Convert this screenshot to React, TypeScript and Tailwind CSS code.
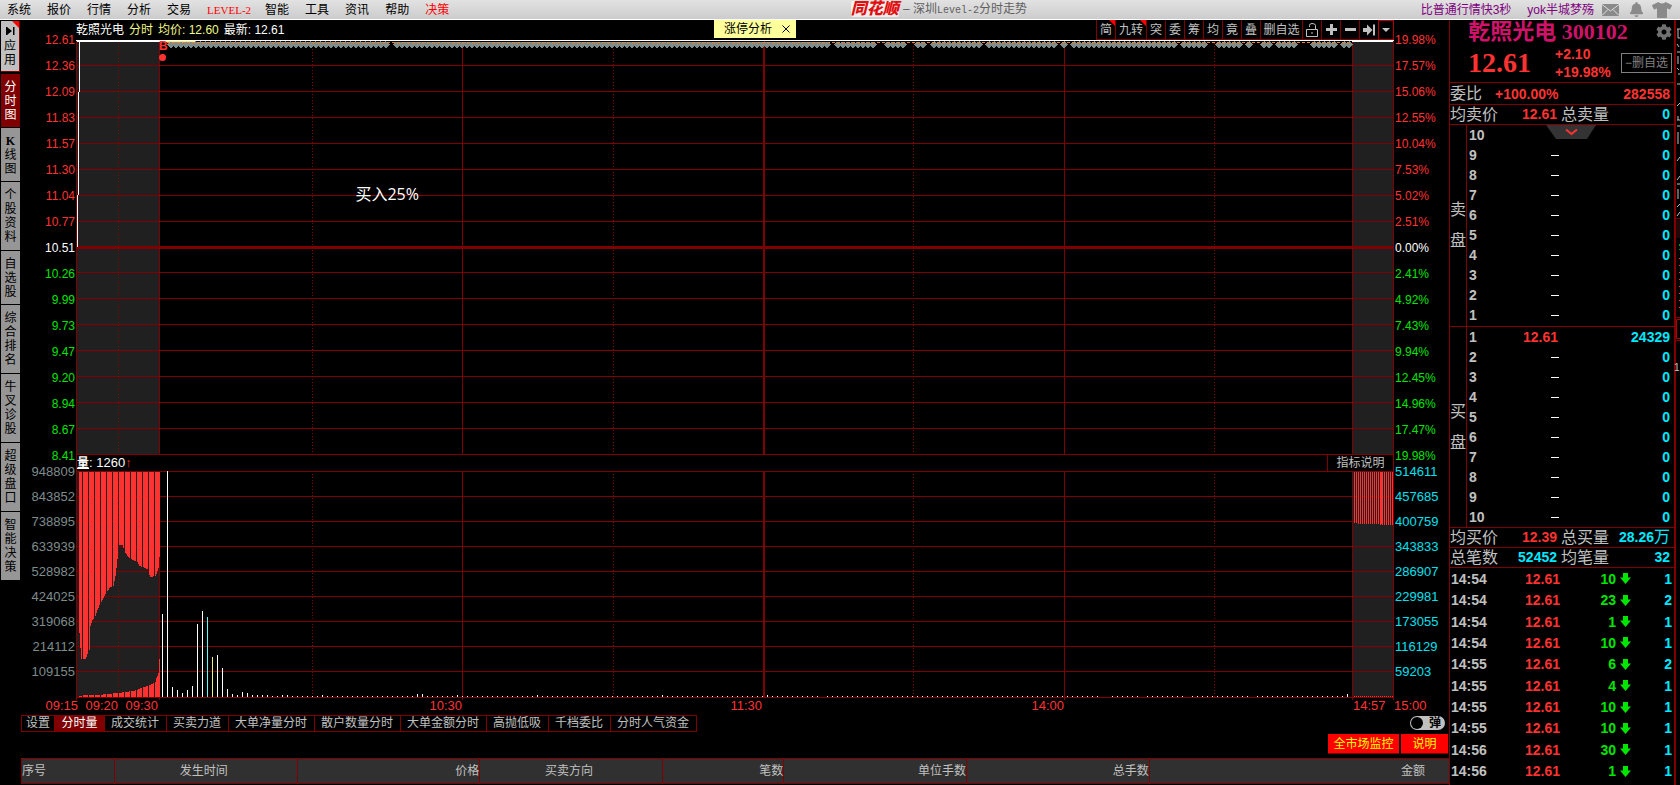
import React from "react";
import clsx from "clsx";
import { FaBell, FaCog, FaTshirt } from "react-icons/fa";

const menu = ["系统", "报价", "行情", "分析", "交易", "LEVEL-2", "智能", "工具", "资讯", "帮助", "决策"];

const sideTabs = ["分时图", "K线图", "个股资料", "自选股", "综合排名", "牛叉诊股", "超级盘口", "智能决策"];

const prices = [
  "12.61", "12.36", "12.09", "11.83", "11.57", "11.30", "11.04", "10.77", "10.51",
  "10.26", "9.99", "9.73", "9.47", "9.20", "8.94", "8.67", "8.41",
];
const percents = [
  "19.98%", "17.57%", "15.06%", "12.55%", "10.04%", "7.53%", "5.02%", "2.51%", "0.00%",
  "2.41%", "4.92%", "7.43%", "9.94%", "12.45%", "14.96%", "17.47%", "19.98%",
];
const volumesLeft = ["948809", "843852", "738895", "633939", "528982", "424025", "319068", "214112", "109155"];
const volumesRight = ["514611", "457685", "400759", "343833", "286907", "229981", "173055", "116129", "59203"];

const indicatorTabs = [
  "成交统计", "买卖力道", "大单净量分时", "散户数量分时", "大单金额分时", "高抛低吸", "千档委比", "分时人气资金",
];

const columns = [
  { label: "序号", className: "w-[6.5%] text-left" },
  { label: "发生时间", className: "w-[12.8%] pr-1 text-center" },
  { label: "价格", className: "w-[12.8%] text-right" },
  { label: "买卖方向", className: "w-[12.8%] pr-1 text-center" },
  { label: "笔数", className: "w-[8.5%] text-right" },
  { label: "单位手数", className: "w-[12.8%] text-right" },
  { label: "总手数", className: "w-[12.8%] text-right" },
  { label: "金额", className: "pr-6 text-right" },
];

const ticks = [
  ["14:54", "10", "1"],
  ["14:54", "23", "2"],
  ["14:54", "1", "1"],
  ["14:54", "10", "1"],
  ["14:55", "6", "2"],
  ["14:55", "4", "1"],
  ["14:55", "10", "1"],
  ["14:55", "10", "1"],
  ["14:56", "30", "1"],
  ["14:56", "1", "1"],
];

const GRID = "#800000";
const SHADE = "#202020";
const RED = "#ff3232";

// runs of large-order markers along the limit price
const markerRuns = [
  [167, 391], [393, 833], [834, 878], [884, 908], [914, 928], [930, 984], [985, 1059], [1060, 1069],
  [1070, 1179], [1180, 1208], [1215, 1244], [1245, 1254], [1260, 1274], [1275, 1299], [1310, 1339], [1340, 1354],
];

// [x, y] of the lower edge of the unmatched auction volume
const auctionTop = [
  [79, 633], [80, 648], [81, 659], [85, 659], [87, 654], [89, 650], [90, 626], [92, 620], [95, 616], [97, 610],
  [99, 605], [101, 602], [104, 596], [106, 592], [110, 587], [113, 586], [115, 576], [117, 559], [118, 545],
  [122, 545], [124, 551], [127, 556], [130, 559], [137, 562], [139, 566], [143, 567], [147, 569], [148, 573],
  [150, 577], [155, 576], [157, 571], [158, 568], [159, 557],
];
const auctionBottom = [
  [79, 696], [83, 695], [97, 695], [107, 694], [118, 693], [124, 692], [133, 691], [141, 688], [147, 686],
  [151, 684], [155, 682], [156, 678], [158, 673], [159, 659],
];

const tallBars: Record<number, number> = {
  162: 614, 167: 471, 172: 687, 177: 690, 182: 693, 187: 690, 192: 686, 197: 624, 202: 611, 207: 617, 212: 657,
  217: 655, 222: 668, 227: 689, 232: 694, 237: 695, 242: 692, 247: 693, 252: 695, 257: 695, 262: 695, 267: 695,
  282: 695, 287: 695, 322: 695, 417: 694, 422: 694, 457: 695, 537: 695, 662: 695, 767: 695, 1347: 694,
};
const emptyMinutes = [822, 1102, 1107, 1142, 1187, 1252];

function level(points: number[][], x: number) {
  const i = points.findIndex((p) => p[0] >= x);
  if (i <= 0) return points[0][1];
  const [x0, y0] = points[i - 1];
  const [x1, y1] = points[i];
  return Math.round(y0 + ((y1 - y0) * (x - x0)) / (x1 - x0));
}

function range(from: number, to: number, step: number) {
  const out: number[] = [];
  for (let v = from; v <= to; v += step) out.push(v);
  return out;
}

function Verticals({ top, bottom, tick }: { top: number; bottom: number; tick: number }) {
  return (
    <g stroke={GRID}>
      {[118.5, 312.5, 613.5, 913.5, 1214.5].map((x) => (
        <line key={x} x1={x} x2={x} y1={top} y2={bottom} strokeDasharray="1 2" />
      ))}
      {[76.5, 159.5, 462.5, 1064.5, 1352.5, 1393.5].map((x) => (
        <line key={x} x1={x} x2={x} y1={top} y2={bottom + tick} />
      ))}
      <line x1={764} x2={764} y1={top} y2={bottom} strokeWidth={2} />
    </g>
  );
}

function PriceChart() {
  return (
    <svg
      viewBox="76 40 1318 415"
      preserveAspectRatio="none"
      shapeRendering="crispEdges"
      className="block h-[415px] w-full"
    >
      <rect x={77} y={40} width={82} height={415} fill={SHADE} />
      <rect x={1353} y={40} width={40} height={415} fill={SHADE} />
      <g stroke={GRID}>
        {[65, 91, 117, 143, 169, 195, 221, 272, 298, 324, 350, 376, 402, 428, 454].map((y) => (
          <line key={y} x1={76} x2={1394} y1={y + 0.5} y2={y + 0.5} />
        ))}
        <line x1={76} x2={1394} y1={247.5} y2={247.5} strokeWidth={3} />
      </g>
      <Verticals top={40} bottom={455} tick={0} />
      <g fill="#7f8c8c">
        {markerRuns.flatMap(([a, b]) =>
          range(a + 4, b - 4, 5).map((x) => (
            <polygon key={x} points={`${x - 4},44.5 ${x - 1},41 ${x + 1},41 ${x + 4},44.5 ${x},49`} />
          )),
        )}
      </g>
      <line x1={167} x2={1352} y1={42.5} y2={42.5} stroke="#ff8020" strokeDasharray="3 2" />
      <line x1={161} x2={1352} y1={41.5} y2={41.5} stroke="#000" strokeDasharray="3 2" />
      <rect x={76} y={40} width={1318} height={1} fill="#fff" />
      <rect x={77} y={40} width={84} height={2} fill="#fff" />
      <rect x={161} y={41} width={34} height={1} fill="#f0f080" />
      <rect x={1352} y={40} width={41} height={2} fill="#fff" />
      <g fill="#fff">
        <rect x={79} y={41} width={1} height={51} />
        <rect x={78} y={92} width={1} height={103} />
        <rect x={77} y={195} width={1} height={52} />
      </g>
      <circle cx={162.5} cy={57.5} r={3.5} fill={RED} shapeRendering="auto" />
    </svg>
  );
}

function VolumeChart() {
  return (
    <svg
      viewBox="76 471 1318 229"
      preserveAspectRatio="none"
      shapeRendering="crispEdges"
      className="block h-[229px] w-full"
    >
      <rect x={77} y={472} width={82} height={225} fill={SHADE} />
      <rect x={1353} y={472} width={40} height={225} fill={SHADE} />
      <g stroke={GRID}>
        {[471, 496, 521, 546, 571, 596, 621, 646, 671, 697].map((y) => (
          <line key={y} x1={76} x2={1394} y1={y + 0.5} y2={y + 0.5} />
        ))}
      </g>
      <Verticals top={471} bottom={697} tick={3} />
      <g fill={RED}>
        {range(79, 159, 1)
          .filter((x) => (x - 82) % 6 !== 0)
          .map((x) => (
            <React.Fragment key={x}>
              <rect x={x} y={472} width={1} height={level(auctionTop, x) - 472} />
              <rect x={x} y={level(auctionBottom, x)} width={1} height={697 - level(auctionBottom, x)} />
            </React.Fragment>
          ))}
        {range(1354, 1392, 2).map((x) => (
          <React.Fragment key={x}>
            <rect x={x} y={472} width={1} height={x < 1358 ? 51 : x < 1380 ? 52 : 53} />
            <rect x={x} y={696} width={1} height={1} />
          </React.Fragment>
        ))}
        <rect x={1381} y={472} width={1} height={52} />
      </g>
      {range(162, 1347, 5)
        .filter((x) => !emptyMinutes.includes(x))
        .map((x) => {
          const top = tallBars[x] ?? 696;
          const fill = x === 207 ? "#54fcfc" : x === 212 ? "#f0f080" : "#fff";
          return <rect key={x} x={x} y={top} width={1} height={697 - top} fill={fill} />;
        })}
    </svg>
  );
}

function Axis({
  scale,
  volumes,
  className,
  volumeClass,
}: {
  scale: string[];
  volumes: string[];
  className: string;
  volumeClass: string;
}) {
  return (
    <div className={clsx("shrink-0 pt-[7px]", className)}>
      <ul className="h-[432px] text-xs">
        {scale.map((value, i) => (
          <li
            key={i}
            className={clsx(
              "h-[26px] leading-[26px]",
              i < 8 ? "text-[#ff3232]" : i === 8 ? "text-white" : "text-[#00e600]",
            )}
          >
            {value}
          </li>
        ))}
      </ul>
      <ul className={clsx("text-[13px]", volumeClass)}>
        {volumes.map((value) => (
          <li key={value} className="h-[25px] leading-[25px]">
            {value}
          </li>
        ))}
      </ul>
    </div>
  );
}

function TopBar() {
  return (
    <header className="flex h-5 shrink-0 items-center border-b border-white bg-linear-to-b from-[#e2e2e2] to-[#cccccc] text-xs text-black">
      <nav className="flex gap-4 pl-[7px]">
        {menu.map((item) => (
          <a
            key={item}
            href="#"
            className={clsx(
              "whitespace-nowrap",
              item === "LEVEL-2" && "w-[42px] font-['Liberation_Serif',serif] text-[11px] leading-4 text-[#ff0000]",
              item === "决策" && "text-[#ff0000]",
            )}
          >
            {item}
          </a>
        ))}
      </nav>
      <h1 className="flex flex-1 items-center justify-center gap-1 pl-2 whitespace-nowrap text-[#606060]">
        <span className="rounded-xs bg-white/60 text-base leading-4 font-black text-[#e01010] italic">同花顺</span>
        <span>
          – 深圳<span className="font-['Liberation_Mono',monospace] text-[10px]">Level-2</span>分时走势
        </span>
      </h1>
      <div className="flex items-center pr-2 whitespace-nowrap text-[#800080]">
        <a href="#" className="mr-4">比普通行情快3秒</a>
        <a href="#" className="mr-2">yok半城梦殇</a>
        <button type="button" aria-label="邮件" className="mr-2.5">
          <svg viewBox="0 0 17 12" className="h-3 w-[17px]">
            <rect width="17" height="12" fill="#8a8a8a" />
            <path d="M0 0.5 8.5 7 17 0.5M0 11.5 6 5.5M17 11.5 11 5.5" stroke="#dcdcdc" fill="none" />
          </svg>
        </button>
        <button type="button" aria-label="提醒" className="mr-2">
          <FaBell className="size-[15px] text-[#8a8a8a]" />
        </button>
        <button type="button" aria-label="皮肤">
          <FaTshirt className="h-4 w-5 text-[#8a8a8a]" />
        </button>
      </div>
    </header>
  );
}

function SideBar() {
  return (
    <aside className="flex w-5 shrink-0 flex-col pt-px pl-px text-xs leading-[14px] text-black">
      <button
        type="button"
        className="relative mb-0.5 flex h-[51px] flex-col items-center border-r border-b border-[#800000] bg-[#c0c0c0] pt-1"
      >
        <span className="absolute top-0 right-0 border-t-[7px] border-l-[7px] border-t-[#ff0000] border-l-transparent" />
        <svg viewBox="0 0 9 8" className="mt-0.5 mb-1 h-2 w-[9px] shrink-0">
          <path d="M0 0H1.5V8H0ZM1.5 0.5 6 4 1.5 7.5ZM7 0H8.5V8H7Z" />
        </svg>
        <span>应</span>
        <span>用</span>
      </button>
      {sideTabs.map((tab, i) => (
        <button
          key={tab}
          type="button"
          className={clsx(
            "flex flex-col items-center justify-center border-b border-black",
            tab.length > 3 ? "h-[69px]" : "h-[54px]",
            i === 0 ? "bg-[#800000] text-white" : "bg-[#969696]",
          )}
        >
          {[...tab].map((ch) => (
            <span key={ch} className={clsx(ch === "K" && "font-['Liberation_Serif',serif] font-bold")}>
              {ch}
            </span>
          ))}
        </button>
      ))}
    </aside>
  );
}

function ToolButton({ children, className = "w-[19px]", flag = false }: {
  children: React.ReactNode;
  className?: string;
  flag?: boolean;
}) {
  return (
    <button
      type="button"
      className={clsx("relative flex items-center justify-center border-b border-l border-[#800000]", className)}
    >
      {flag && (
        <span className="absolute top-0 right-0 border-t-[6px] border-l-[6px] border-t-[#ff0000] border-l-transparent" />
      )}
      {children}
    </button>
  );
}

function ChartHeader() {
  return (
    <div className="relative flex h-5 items-center justify-between text-xs whitespace-nowrap text-white">
      <p className="flex items-center gap-[5px]">
        <span>乾照光电</span>
        <span className="text-[#f0f888]">分时</span>
        <span className="text-[#f0f888]">均价: 12.60</span>
        <span>最新: 12.61</span>
      </p>
      <div className="absolute top-0 left-[48.4%] flex h-[18px] w-[82px] items-center justify-between bg-[#ffff9c] pr-1.5 pl-2.5 text-black">
        涨停分析
        <button type="button" aria-label="关闭">
          <svg viewBox="0 0 8 8" className="size-2">
            <path d="M0.5 0.5 7.5 7.5M7.5 0.5 0.5 7.5" stroke="#000" />
          </svg>
        </button>
      </div>
      <div className="flex h-5 items-stretch text-[#c0c0c0]">
        <ToolButton flag>简</ToolButton>
        <ToolButton flag className="w-[31px]">九转</ToolButton>
        {["突", "委", "筹", "均", "竟", "叠"].map((label) => (
          <ToolButton key={label}>{label}</ToolButton>
        ))}
        <ToolButton className="w-[42px]">删自选</ToolButton>
        <ToolButton>
          <svg viewBox="0 0 12 14" className="h-3.5 w-3" fill="none" stroke="#c0c0c0">
            <path d="M0.5 6.5H11.5V13.5H0.5ZM3.5 4V2.5Q3.5 0.5 6 0.5Q9.5 0.5 9.5 2.5V6.5M6 9V11" />
          </svg>
        </ToolButton>
        <ToolButton>
          <svg viewBox="0 0 11 11" className="size-[11px]" fill="#c0c0c0">
            <path d="M4 0H7V4H11V7H7V11H4V7H0V4H4Z" />
          </svg>
        </ToolButton>
        <ToolButton>
          <svg viewBox="0 0 11 11" className="size-[11px]" fill="#c0c0c0">
            <path d="M0 4H11V7H0Z" />
          </svg>
        </ToolButton>
        <ToolButton>
          <svg viewBox="0 0 12 12" className="size-3" fill="#c0c0c0">
            <path d="M0 4H4V0.5L9.5 6 4 11.5V8H0ZM10 0.5H12V11.5H10Z" />
          </svg>
        </ToolButton>
        <button
          type="button"
          aria-label="更多"
          className="flex w-4 items-center justify-center border border-[#b00000]"
        >
          <span className="border-x-4 border-t-4 border-x-transparent border-t-[#c0c0c0]" />
        </button>
      </div>
    </div>
  );
}

function TimeAxis() {
  return (
    <div className="flex h-[15px] text-[13px] leading-[11px] text-[#ff3232]">
      <span className="w-[58px] text-right">09:15</span>
      <span className="w-10 text-right">09:20</span>
      <span className="w-10 text-right">09:30</span>
      <span className="flex-[304] text-right">10:30</span>
      <span className="flex-[300] text-right">11:30</span>
      <span className="flex-[302] text-right">14:00</span>
      <span className="flex-[289]" />
      <span className="w-[41px]">14:57</span>
      <span className="w-[55px]">15:00</span>
    </div>
  );
}

function IndicatorBar() {
  return (
    <div className="flex justify-between pl-px text-xs whitespace-nowrap text-[#c0c0c0]">
      <div className="flex h-[17px] border border-[#800000] leading-[15px]">
        <button type="button" className="w-8">设置</button>
        <button type="button" className="w-[51px] bg-[#800000] text-white">分时量</button>
        {indicatorTabs.map((tab, i) => (
          <button
            key={tab}
            type="button"
            className={clsx("pr-[7px] pl-1.5", i > 0 && "border-l border-[#800000]")}
          >
            {tab}
          </button>
        ))}
      </div>
      <label className="mt-px mr-1 flex h-3.5 w-[35px] items-center justify-between rounded-full bg-[#c0c0c0] pr-1 pl-px font-bold text-black">
        <input type="checkbox" className="size-3 appearance-none rounded-full bg-black" />弹
      </label>
    </div>
  );
}

function Main() {
  return (
    <main className="flex min-w-0 flex-1 flex-col">
      <div className="flex">
        <Axis
          scale={prices}
          volumes={volumesLeft}
          className="w-14 pr-px text-right"
          volumeClass="text-[#7f8c8c]"
        />
        <div className="relative min-w-0 flex-1">
          <ChartHeader />
          <PriceChart />
          <span className="absolute top-5 left-[6.3%] text-xs leading-3 font-bold text-[#ff3232]">B</span>
          <span className="absolute top-[162px] left-[21.2%] font-['Open_Sans','Noto_Sans_CJK_SC',sans-serif] text-base text-white">
            买入25%
          </span>
          <div className="flex h-4 items-center justify-between border-x border-[#800000] text-white">
            <p className="text-[13px] leading-4">
              <span className="text-xs font-bold underline">量</span>: 1260<span className="text-[#ff3232]">↑</span>
            </p>
            <button type="button" className="h-4 w-[66px] border-l border-[#800000] text-xs leading-4 text-[#c0c0c0]">
              指标说明
            </button>
          </div>
          <VolumeChart />
        </div>
        <Axis
          scale={percents}
          volumes={volumesRight}
          className="w-[55px] pl-px"
          volumeClass="text-[#00e0f0]"
        />
      </div>
      <TimeAxis />
      <IndicatorBar />
      <div className="mt-0.5 mb-1 flex h-5 justify-end gap-0.5 pr-px text-xs text-[#ffff00]">
        <button type="button" className="w-[71px] border-b border-[#800000] bg-[#ff0000]">全市场监控</button>
        <button type="button" className="w-[47px] border-b border-[#800000] bg-[#ff0000]">说明</button>
      </div>
      <table className="ml-px table-fixed border-collapse border-y border-l border-[#800000] text-xs text-[#c0c0c0]">
        <thead>
          <tr className="h-[25px] bg-[#303030]">
            {columns.map((col) => (
              <th
                key={col.label}
                className={clsx("border-l border-[#800000] font-normal whitespace-nowrap", col.className)}
              >
                {col.label}
              </th>
            ))}
          </tr>
        </thead>
      </table>
    </main>
  );
}

function Depth({ side, levels }: { side: string; levels: number[] }) {
  const buy = side === "买盘";
  return (
    <section className="flex border-t border-[#800000]">
      <div className="flex w-[17px] flex-col items-center justify-center gap-[7px] border-r border-[#800000] text-base leading-6 text-[#c0c0c0]">
        {[...side].map((ch) => (
          <span key={ch}>{ch}</span>
        ))}
      </div>
      <ul className={clsx("flex-1", !buy && "pb-px")}>
        {levels.map((n) => (
          <li key={n} className="flex h-5 items-center pr-1 pl-0.5 leading-[18px] font-bold">
            <span className="w-[54px] text-[#c0c0c0]">{n}</span>
            {buy && n === 1 ? (
              <span className="text-[#ff3232]">12.61</span>
            ) : (
              <span className={clsx("ml-7 h-px w-2 bg-white", !buy && n === 10 && "invisible")} />
            )}
            <span className="ml-auto text-[#00e8ff]">{buy && n === 1 ? "24329" : "0"}</span>
          </li>
        ))}
      </ul>
    </section>
  );
}

function SummaryRow({ label, value, label2, value2, cyan = false }: {
  label: string;
  value: string;
  label2: string;
  value2: React.ReactNode;
  cyan?: boolean;
}) {
  return (
    <div className="flex h-5 items-center border-t border-[#800000] pr-1 leading-[19px] whitespace-nowrap">
      <span className="w-12 text-base leading-[19px] text-[#c0c0c0]">{label}</span>
      <span className={clsx("w-[59px] text-right font-bold", cyan ? "text-[#00e8ff]" : "text-[#ff3232]")}>
        {value}
      </span>
      <span className="ml-1 text-base leading-[19px] text-[#c0c0c0]">{label2}</span>
      <span className="ml-auto font-bold text-[#00e8ff]">{value2}</span>
    </div>
  );
}

function Quote() {
  return (
    <aside className="w-[227px] shrink-0 border-r-2 border-l border-[#800000] text-sm">
      <div className="relative flex h-6 items-center justify-center pr-7 font-['Liberation_Serif','Noto_Sans_CJK_SC',serif] text-[22px] leading-6 font-bold whitespace-nowrap text-[#d0126a]">
        乾照光电 300102
        <button type="button" aria-label="设置" className="absolute top-1 right-0.5">
          <FaCog className="size-4 text-[#707070]" />
        </button>
      </div>
      <div className="flex h-[38px] items-center pr-0.5 pl-[18px]">
        <span className="font-['Liberation_Serif',serif] text-[28px] leading-7 font-bold text-[#ff3232]">12.61</span>
        <div className="ml-6 w-[66px] leading-[18px] font-bold text-[#ff3232]">
          <p>+2.10</p>
          <p>+19.98%</p>
        </div>
        <button
          type="button"
          className="h-5 w-[51px] border border-[#808080] text-xs whitespace-nowrap text-[#808080]"
        >
          −删自选
        </button>
      </div>
      <div className="flex h-[22px] items-center border-t border-[#800000] pr-1">
        <span className="text-base text-[#c0c0c0]">委比</span>
        <span className="ml-[13px] font-bold text-[#ff3232]">+100.00%</span>
        <span className="ml-auto font-bold text-[#ff3232]">282558</span>
      </div>
      <SummaryRow label="均卖价" value="12.61" label2="总卖量" value2="0" />
      <div className="relative">
        <button type="button" aria-label="收起" className="absolute top-px left-24 h-3.5 w-[50px]">
          <svg viewBox="0 0 50 14" className="block h-3.5 w-[50px]">
            <path d="M0 0H50L41 14H10Z" fill="#333" />
            <path d="M20 4.5 25.5 9 31 4.5" fill="none" stroke={RED} strokeWidth="2" />
          </svg>
        </button>
        <Depth side="卖盘" levels={[10, 9, 8, 7, 6, 5, 4, 3, 2, 1]} />
      </div>
      <Depth side="买盘" levels={[1, 2, 3, 4, 5, 6, 7, 8, 9, 10]} />
      <SummaryRow
        label="均买价"
        value="12.39"
        label2="总买量"
        value2={
          <>
            28.26<span className="text-base leading-4 font-normal">万</span>
          </>
        }
      />
      <SummaryRow label="总笔数" value="52452" label2="均笔量" value2="32" cyan />
      <table className="h-[215px] w-full border-t border-[#800000] font-bold">
        <tbody>
          {ticks.map(([time, amount, count], i) => (
            <tr key={i} className="leading-5">
              <td className="w-[60px] pl-px text-[#c0c0c0]">{time}</td>
              <td className="w-[50px] text-right text-[#ff3232]">12.61</td>
              <td className="text-right text-[#00e600]">{amount}</td>
              <td className="w-4 pl-1">
                <svg viewBox="0 0 11 11" className="h-[11px] w-[11px]" fill="#00e600">
                  <path d="M3 0H8V4.5H11L5.5 11 0 4.5H3Z" />
                </svg>
              </td>
              <td className="w-[42px] pr-0.5 text-right text-[#00e8ff]">{count}</td>
            </tr>
          ))}
        </tbody>
      </table>
    </aside>
  );
}

// sliver of the neighbouring panel at the window edge
function EdgeStrip() {
  return (
    <div className="w-1 shrink-0 pt-1 text-[#c0c0c0]">
      <svg viewBox="0 0 4 332" className="block h-[332px] w-1">
        <path
          d="M1 5H4M2 5V14M2 14H4M1 20 3 23M1 28H4M2 32V40M1 44 3 46M2 50H4M1 60H4M1 82 4 79M2 92V96M1 96H4M1 102H4M2 108V120M1 137 4 133M1 156 4 152M1 160H4M2 165V175M1 183 4 180M1 192 4 188"
          stroke="#c0c0c0"
          fill="none"
        />
        <path d="M0 194.5H4M0 293.5H4M0 316.5H4" stroke={GRID} />
        <rect y="196" width="4" height="18" fill="#200808" />
        <path d="M3.5 220V226" stroke="#00a000" strokeDasharray="2 3" />
        <path d="M3.5 234V290" stroke={RED} strokeDasharray="1 6" />
        <path d="M4 295.5H0.5V314.5H4" stroke="#b00000" fill="none" />
      </svg>
      <span className="-ml-0.5 block pt-1 text-[10px] leading-4">1</span>
    </div>
  );
}

export default function App() {
  return (
    <div className="flex min-h-screen flex-col overflow-hidden bg-black font-['Liberation_Sans','Noto_Sans_CJK_SC',sans-serif]">
      <TopBar />
      <div className="flex flex-1">
        <SideBar />
        <Main />
        <Quote />
        <EdgeStrip />
      </div>
    </div>
  );
}
